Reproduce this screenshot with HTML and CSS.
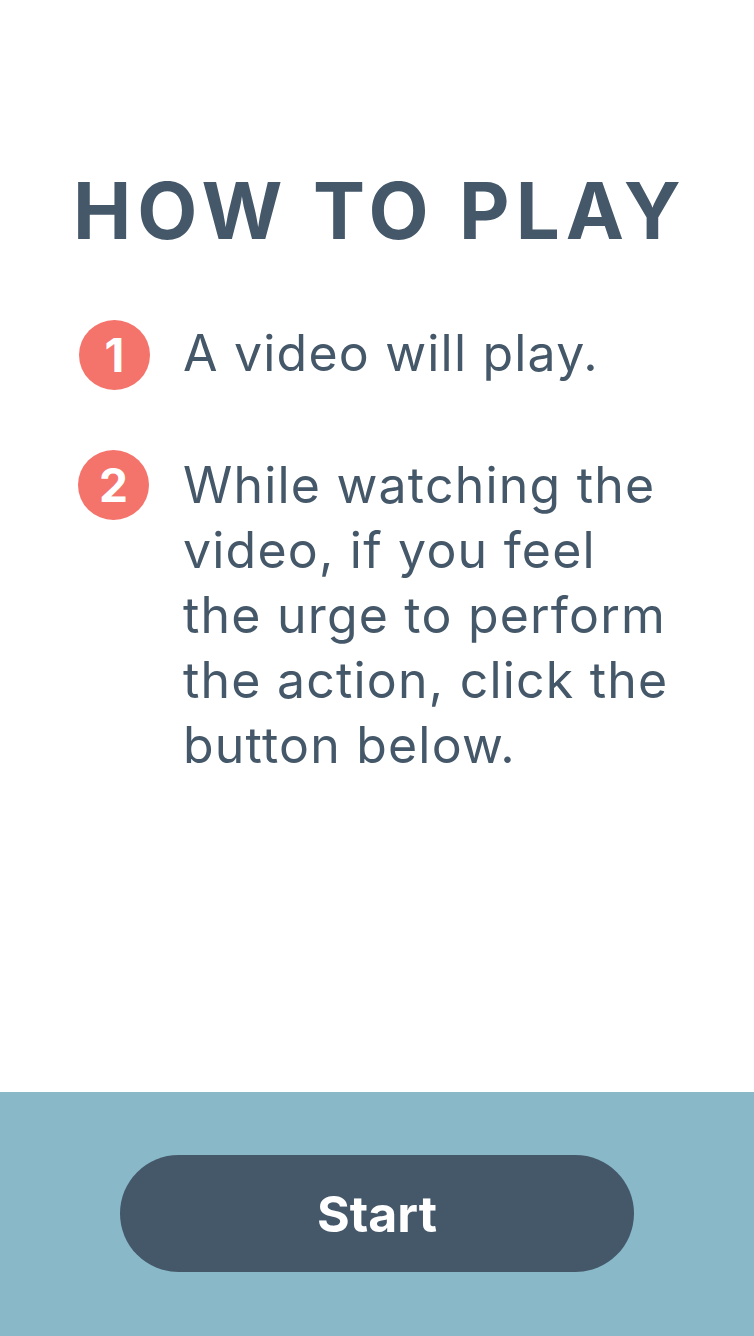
FILE: index.html
```html
<!DOCTYPE html>
<html lang="en">
<head>
<meta charset="utf-8">
<title>How to play</title>
<link rel="stylesheet" href="styles.css">
</head>
<body>
<div class="page">
  <main class="content">
    <h1 class="title">HOW TO PLAY</h1>
    <ol class="steps">
      <li class="step">
        <span class="num">1</span>
        <p class="text">A video will play.</p>
      </li>
      <li class="step">
        <span class="num">2</span>
        <p class="text">While watching the<br>video, if you feel<br>the urge to perform<br>the action, click the<br>button below.</p>
      </li>
    </ol>
  </main>
  <footer class="footer">
    <button class="start">Start</button>
  </footer>
</div>
</body>
</html>
```

FILE: styles.css
```css
html, body {
  margin: 0;
  padding: 0;
  background: #ffffff;
}
body {
  font-family: Inter, "Liberation Sans", sans-serif;
  color: #455869;
}
.page {
  width: 754px;
  height: 1336px;
  display: flex;
  flex-direction: column;
}
.content {
  flex: 1;
  padding-top: 168px;
}
.title {
  margin: 0;
  text-align: center;
  font-size: 78px;
  line-height: 86px;
  font-weight: 700;
  letter-spacing: 6px;
  padding-left: 6px;
}
.steps {
  list-style: none;
  margin: 67px 0 0;
  padding: 0 0 0 79px;
  display: flex;
  flex-direction: column;
  gap: 63px;
}
.step {
  display: grid;
  grid-template-columns: 71px 1fr;
  column-gap: 33px;
  align-items: start;
}
.num {
  width: 71px;
  height: 70px;
  border-radius: 50%;
  background: #f4736b;
  color: #ffffff;
  font-weight: 700;
  font-size: 46px;
  display: flex;
  align-items: center;
  justify-content: center;
  margin-top: -1px;
}
.step + .step .num {
  margin-top: -3px;
  margin-left: -1px;
}
.text {
  margin: 0;
  font-size: 50px;
  line-height: 65px;
  font-weight: 400;
  letter-spacing: 1.2px;
}
.footer {
  height: 244px;
  background: #89b9c9;
  display: flex;
  justify-content: center;
  padding-top: 63px;
  box-sizing: border-box;
}
.start {
  width: 514px;
  height: 117px;
  border: none;
  border-radius: 59px;
  background: #455869;
  color: #ffffff;
  font-family: Inter, "Liberation Sans", sans-serif;
  font-weight: 700;
  font-size: 50px;
  padding: 0;
}
```
